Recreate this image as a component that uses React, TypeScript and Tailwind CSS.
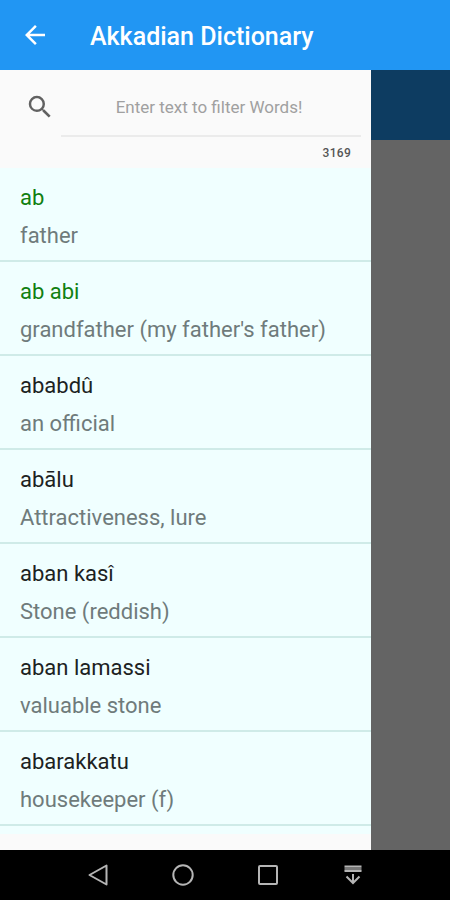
import { useState } from "react";
import { MdArrowBack, MdSearch } from "react-icons/md";

type Entry = {
  word: string;
  meaning: string;
  visited?: boolean;
};

const TOTAL_WORDS = 3169;

const entries: Entry[] = [
  { word: "ab", meaning: "father", visited: true },
  { word: "ab abi", meaning: "grandfather (my father's father)", visited: true },
  { word: "ababdû", meaning: "an official" },
  { word: "abālu", meaning: "Attractiveness, lure" },
  { word: "aban kasî", meaning: "Stone (reddish)" },
  { word: "aban lamassi", meaning: "valuable stone" },
  { word: "abarakkatu", meaning: "housekeeper (f)" },
];

function AppBar() {
  return (
    <header className="flex h-[70px] items-center bg-[#2196f3] pl-5 text-white">
      <button type="button" aria-label="Back" className="grid h-10 w-[30px] place-items-center">
        <MdArrowBack className="h-[30px] w-[30px]" />
      </button>
      <h1 className="pt-1 pl-10 text-[25px] font-medium">Akkadian Dictionary</h1>
    </header>
  );
}

type SearchBoxProps = {
  value: string;
  count: number;
  onChange: (value: string) => void;
};

function SearchBox({ value, count, onChange }: SearchBoxProps) {
  return (
    <div className="h-[98px] bg-[#fafafa] pr-[10px] pl-[25px]">
      <div className="flex h-[67px] items-center">
        <label htmlFor="filter" aria-label="Filter words" className="w-9 pt-[6px] text-[#616161]">
          <MdSearch className="h-[30px] w-[30px]" />
        </label>
        <input
          id="filter"
          className="h-full min-w-0 flex-1 border-b-2 border-[#ebebeb] bg-transparent pt-2 pr-1 text-center text-[17px] text-[#333333] outline-none placeholder:text-[#a0a0a0]"
          type="text"
          placeholder="Enter text to filter Words!"
          value={value}
          onChange={(event) => onChange(event.target.value)}
        />
      </div>
      <p className="pt-2 pr-[10px] text-right text-xs font-medium tracking-wide text-[#555555]">{count}</p>
    </div>
  );
}

function EntryRow({ word, meaning, visited }: Entry) {
  return (
    <li className="h-[94px] border-b-2 border-[#cfebe8] px-5 pt-3">
      <p className={visited ? "text-[22px] leading-9 text-[#118011]" : "text-[22px] leading-9 text-[#1c2222]"}>
        {word}
      </p>
      <p className="text-[22px] leading-10 text-[#6f7b7b]">{meaning}</p>
    </li>
  );
}

function NavigationBar() {
  return (
    <nav className="flex h-[50px] items-center bg-black px-[55px] text-[#b5b5b5]">
      <button type="button" aria-label="Back" className="grid flex-1 place-items-center">
        <svg className="h-6 w-6" viewBox="0 0 24 24" fill="none" stroke="currentColor" strokeWidth="2" strokeLinejoin="round">
          <path d="M20.5 2.5v19L3.5 12z" />
        </svg>
      </button>
      <button type="button" aria-label="Home" className="grid flex-1 place-items-center">
        <svg className="h-6 w-6" viewBox="0 0 24 24" fill="none" stroke="currentColor" strokeWidth="2">
          <circle cx="12" cy="12" r="9.7" />
        </svg>
      </button>
      <button type="button" aria-label="Recent apps" className="grid flex-1 place-items-center">
        <svg className="h-6 w-6" viewBox="0 0 24 24" fill="none" stroke="currentColor" strokeWidth="2">
          <rect x="3" y="3" width="18" height="18" rx="1" />
        </svg>
      </button>
      <button type="button" aria-label="Hide navigation bar" className="grid flex-1 place-items-center">
        <svg className="h-6 w-6" viewBox="0 0 24 24" fill="none" stroke="currentColor" strokeWidth="2">
          <path d="M3.5 6h17" stroke="#777777" strokeWidth="3" />
          <path d="M3.5 3.5h17M3.5 8h17M12 11v9.5M5.5 13.5l6.5 6.5 6.5-6.5" />
        </svg>
      </button>
    </nav>
  );
}

export default function App() {
  const [filter, setFilter] = useState("");

  const shown = entries.filter((entry) => entry.word.includes(filter.trim().toLowerCase()));
  const count = filter.trim() ? shown.length : TOTAL_WORDS;

  return (
    <div className="flex min-h-screen flex-col bg-black font-[Roboto,sans-serif]">
      <AppBar />
      <div className="flex flex-1">
        <main className="min-w-0 flex-1 bg-[#fafafa]">
          <SearchBox value={filter} count={count} onChange={setFilter} />
          <ul className="bg-[#f0ffff] pb-2">
            {shown.map((entry) => (
              <EntryRow key={entry.word} {...entry} />
            ))}
          </ul>
        </main>
        {/* dimmed page behind the open drawer */}
        <div className="w-[79px] bg-[#646464]">
          <div className="h-[70px] bg-[#0d3c61]" />
        </div>
      </div>
      <NavigationBar />
    </div>
  );
}
